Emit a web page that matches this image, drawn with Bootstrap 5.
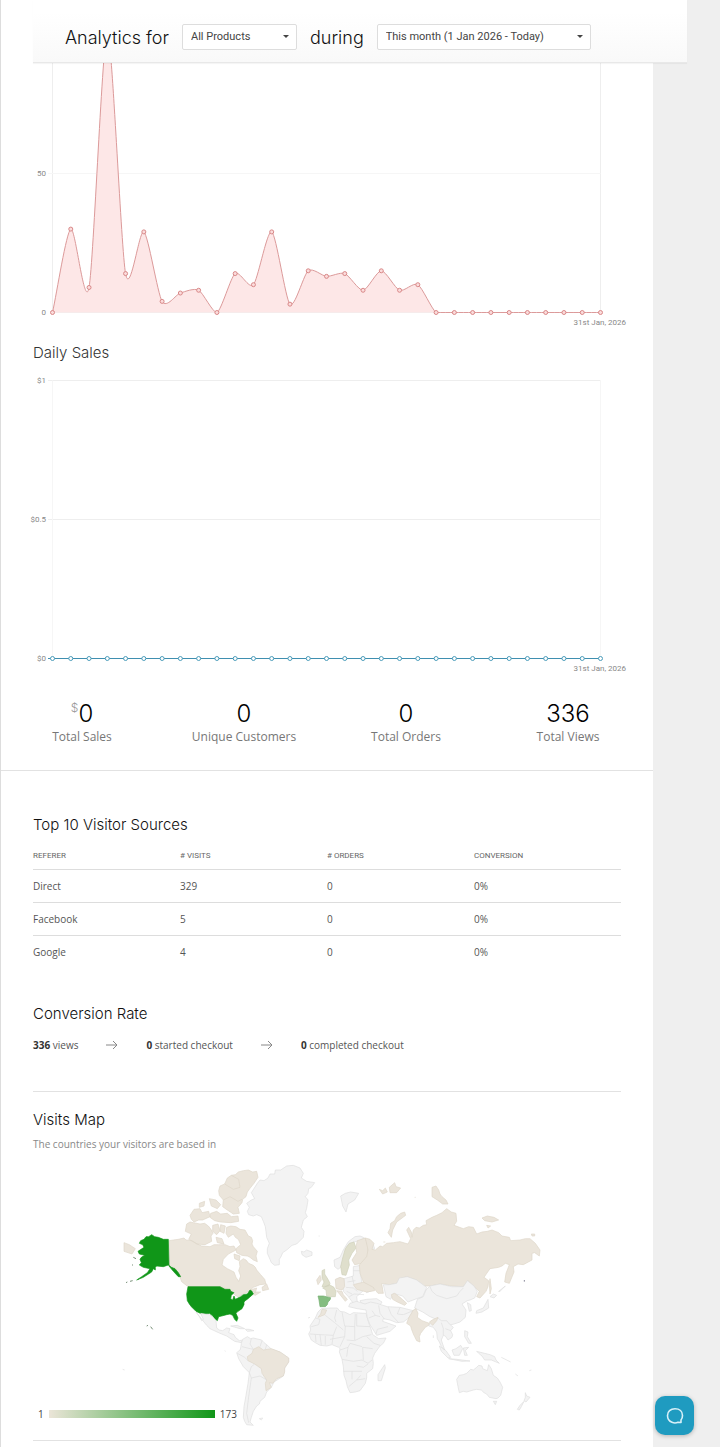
<!DOCTYPE html>
<html lang="en">
<head>
<meta charset="utf-8">
<meta name="viewport" content="width=device-width, initial-scale=1">
<title>Analytics</title>
<link href="https://cdn.jsdelivr.net/npm/bootstrap@5.3.0/dist/css/bootstrap.min.css" rel="stylesheet">
<style>
  body { background: #efefef; font-family: "Open Sans", "Noto Sans", sans-serif; font-size: 10px; line-height: 16px; color: #555; }
  .page { padding-right: 67px; }
  .panel { background: #fff; border-left: 1px solid #ddd; }
  .filters { position: relative; z-index: 2; gap: 13px; margin: 0 -34px 0 32px; padding: 11px 32px 0; height: 63px; background: linear-gradient(#fff 20%, #f9f9f9); border-bottom: 1px solid #e8e8e8; box-shadow: 0 1px 1px rgba(0,0,0,.04); }
  .filters label { font: 300 18px/24px Inter, sans-serif; color: #111; padding-top: 2px; }
  .filters .form-select { height: 26px; font: 11px/16px Roboto, sans-serif; color: #444; padding: 4px 24px 4px 8px; border: 1px solid #ddd; border-radius: 2px; background-image: url("data:image/svg+xml,%3Csvg xmlns='http://www.w3.org/2000/svg' viewBox='0 0 6 4'%3E%3Cpath d='M0 0h6L3 3z' fill='%23444'/%3E%3C/svg%3E"); background-size: 6px 4px; background-position: right 7px center; }
  .filters .pick-product { width: 115px; }
  .filters .pick-period { width: 214px; }
  h2 { font: 300 15px/24px Inter, sans-serif; color: #111; margin: 0; }
  .sales-title { color: #333; padding: 8px 32px; }
  .plot { display: block; width: 100%; height: auto; }
  .plot text { font: 8px Roboto, sans-serif; fill: #888; }
  .plot .rule { stroke: #eee; fill: none; }
  .plot .faint { stroke: #f6f6f6; }
  .visits-line { fill: none; stroke: #dc9a9a; }
  .visits-area { fill: #fde7e7; }
  .visits-dots circle { fill: #fbdcdc; stroke: #d98888; }
  .sales-line { fill: none; stroke: #3f8fb0; }
  .sales-dots circle { fill: #fff; stroke: #4a9cba; }
  .totals { padding: 14px 4px 25px 0; border-bottom: 1px solid #e2e2e2; }
  .total-figure { font: 300 24px/32px Inter, sans-serif; color: #000; padding-top: 1px; margin-bottom: -1px; }
  .total-figure sup { font-size: 12px; top: -10px; color: #999; line-height: 1; }
  .total-name { font-size: 12px; color: #777; }
  .sections { padding: 42px 32px 6px; }
  .sources { table-layout: fixed; width: 100%; }
  .sources th { font: 8px/12px Roboto, sans-serif; color: #666; text-transform: uppercase; padding: 13px 0 7px; border-bottom: 1px solid #ddd; }
  .sources td { padding: 8px 0; border-bottom: 1px solid #ddd; }
  .sources tr:last-child td { border-bottom: 0; }
  .conversion { margin-top: 34px; }
  .funnel { margin-top: 11px; gap: 28px; }
  .funnel strong { color: #333; }
  .split { border-top: 1px solid #e2e2e2; }
  .visits { margin-top: 38px; padding-top: 16px; }
  .page-end { margin-top: 10px; }
  .map-note { margin: 4px 0 0; color: #888; }
  .map-box { margin-top: 8px; }
  .world { display: block; width: 100%; height: auto; stroke-width: 2; stroke-linejoin: round; }
  .land { fill: #f3f3f3; stroke: #dedede; }
  .few { fill: #ebe5db; stroke: #ded7c9; }
  .some { fill: #dfdfcc; stroke: #cfd0ba; }
  .many { fill: #84bd80; stroke: #74ad70; }
  .most { fill: #109618; stroke: #109618; }
  .edge { fill: none; stroke: #dedede; }
  .few-edge { fill: none; stroke: #ded7c9; }
  .legend-row { position: absolute; left: 5px; bottom: 8px; gap: 5px; color: #444; }
  .ramp { width: 166px; height: 8px; background: linear-gradient(90deg, #ebe5d8, #109618); }
  .chat { position: fixed; right: 26px; bottom: 12px; width: 39px; height: 39px; border: 0; border-radius: 10px; background: #1f9bc0; box-shadow: 0 1px 4px rgba(0,0,0,.25); }
</style>
</head>
<body>
<div class="page">
<main class="panel">
  <form class="filters d-flex align-items-center">
    <label for="product">Analytics for</label>
    <select class="form-select pick-product" id="product"><option>All Products</option></select>
    <label for="period">during</label>
    <select class="form-select pick-period" id="period"><option>This month (1 Jan 2026 - Today)</option></select>
  </form>

  <svg class="plot" id="views-plot" viewBox="1 63 652 270" role="img" aria-label="Daily views">
    <path class="rule" d="M52.5 63V312.5H600.5V63"/>
    <path class="rule faint" d="M48 173.5H600.5"/>
    <path class="visits-area"/><path class="visits-line"/><g class="visits-dots"></g>
    <text x="46" y="176" text-anchor="end">50</text>
    <text x="46" y="315" text-anchor="end">0</text>
    <text x="626" y="325" text-anchor="end">31st Jan, 2026</text>
  </svg>

  <h2 class="sales-title">Daily Sales</h2>
  <svg class="plot" id="sales-plot" viewBox="1 373 652 310" role="img" aria-label="Daily sales">
    <path class="rule" d="M48 380.5H600.5M48 519.5H600.5"/>
    <path class="rule faint" d="M52.5 380.5V658M600.5 380.5V658"/>
    <path class="sales-line" d="M48 658.5H600.5"/><g class="sales-dots"></g>
    <text x="46" y="383" text-anchor="end">$1</text>
    <text x="46" y="522" text-anchor="end">$0.5</text>
    <text x="46" y="661" text-anchor="end">$0</text>
    <text x="626" y="671" text-anchor="end">31st Jan, 2026</text>
  </svg>

  <div class="totals row g-0 text-center">
    <div class="col"><div class="total-figure"><sup>$</sup>0</div><div class="total-name">Total Sales</div></div>
    <div class="col"><div class="total-figure">0</div><div class="total-name">Unique Customers</div></div>
    <div class="col"><div class="total-figure">0</div><div class="total-name">Total Orders</div></div>
    <div class="col"><div class="total-figure">336</div><div class="total-name">Total Views</div></div>
  </div>

  <div class="sections">
    <section>
      <h2>Top 10 Visitor Sources</h2>
      <table class="sources">
        <thead><tr><th>Referer</th><th># Visits</th><th># Orders</th><th>Conversion</th></tr></thead>
        <tbody>
          <tr><td>Direct</td><td>329</td><td>0</td><td>0%</td></tr>
          <tr><td>Facebook</td><td>5</td><td>0</td><td>0%</td></tr>
          <tr><td>Google</td><td>4</td><td>0</td><td>0%</td></tr>
        </tbody>
      </table>
    </section>

    <section class="conversion">
      <h2>Conversion Rate</h2>
      <div class="funnel d-flex align-items-center">
        <span><strong>336</strong> views</span>
        <svg width="12" height="10" viewBox="0 0 12 10" fill="none" stroke="#888"><path d="M0 5H11M7 1l4 4-4 4"/></svg>
        <span><strong>0</strong> started checkout</span>
        <svg width="12" height="10" viewBox="0 0 12 10" fill="none" stroke="#888"><path d="M0 5H11M7 1l4 4-4 4"/></svg>
        <span><strong>0</strong> completed checkout</span>
      </div>
    </section>

    <section class="split visits">
      <h2>Visits Map</h2>
      <p class="map-note">The countries your visitors are based in</p>
      <div class="map-box position-relative">
        <svg class="world" viewBox="-231 30 1764 810" role="img" aria-label="Visits by country">
          <!-- North America -->
          <path class="few" d="M177 272L190 270 205 268 222 264 228 270 245 272 262 282 275 288 300 290 312 284 325 284 345 284 360 290 372 288 378 300 355 312 340 328 336 345 352 356 372 366 378 382 386 394 392 378 386 362 390 350 388 335 400 326 408 330 416 340 430 346 436 352 440 360 452 374 464 388 468 402 450 404 430 412 420 420 440 414 436 428 420 422 400 432 385 440 375 436 360 420 330 410 234 410 215 395 205 368 190 350 177 345ZM456 412L470 402 476 418 458 422ZM425 432L440 426 452 426 436 436ZM350 232L362 228 378 230 390 238 405 240 415 258 424 262 428 272 426 282 430 290 442 304 438 318 442 335 430 330 420 322 412 318 395 316 380 308 378 296 392 284 385 268 376 262 370 252 355 262 348 250ZM230 222l10-6 10 2 20 4 14-2 11 8 8 10 6 12-6 8 2 16-20 10-25-2-12-8-12-6 8-16-18-8 2-12ZM308 226l16-4 6 20-10 12-12-10ZM332 224l14 4-4 22-12-6ZM318 262l18 4 6 16-20-4ZM372 312l18 6-2 14-14-6ZM240 196l12-18 18-2 6 12 20-4 4 16-22 10-12 0-14 6-8-8ZM268 160l16-6-2 14-14 4ZM298 146l20 4 14 14-10 12-18-8ZM302 190l18-6 12 8 20-2 12 10 20-2 2 16-24 4-30-2-18-4-14-10Z"/>
          <path class="few" d="M440 64L428 66 415 60 400 62 385 66 376 74 364 76 352 84 344 102 330 108 326 122 328 136 340 150 338 170 352 180 370 192 388 190 384 172 396 158 398 148 408 140 412 126 420 115 432 100 444 82ZM42 278L58 284 76 296 66 312 42 304Z"/>
          <path class="few-edge" d="M344 102L370 118 390 112 386 88 364 76M340 150L360 140 384 154 396 148"/>
          <path class="most" d="M175 268L160 268 145 262 134 260 125 254 116 260 108 260 102 268 92 272 88 280 98 284 102 292 84 304 88 312 104 316 94 322 90 328 94 338 88 345 100 352 120 356 112 368 95 380 80 390 100 382 125 366 130 356 136 360 136 352 140 348 160 350 175 345 185 352 195 356 205 368 212 380 205 380 190 364 177 348Z"/>
          <path class="most" d="M234 410L330 410 345 418 360 418 362 424 372 428 364 436 362 446 368 450 372 438 376 448 392 440 400 434 412 432 420 420 426 424 430 432 414 446 406 452 402 456 402 464 396 476 384 484 378 490 384 504 380 514 374 508 368 496 360 492 350 494 335 498 326 500 322 512 314 506 306 496 298 490 288 492 275 492 258 484 244 470 238 462 232 452 230 432Z"/>
          <path d="M60 394l8-2M48 398l4-2M70 322l8 4M66 344l3 2M110 528l4-2M122 530l6 8" stroke="#789078" stroke-width="3"/>
          <path class="land" d="M258 486L268 500 275 512 280 508 272 490 298 494 308 500 318 512 320 534 328 540 338 542 350 534 360 536 356 548 372 554 376 562 388 572 398 570 394 578 374 574 350 558 330 550 300 536 290 526ZM362 528l20-2 22 10-14 0ZM406 538l12 0 14 4-20 2Z"/>

          <!-- South America -->
          <g transform="translate(0 450)">
            <path class="land" d="M398 118L412 110 422 116 430 114 455 120 462 128 470 134 485 148 510 156 536 174 536 186 524 204 520 228 505 238 492 246 484 262 470 276 464 292 450 304 448 312 440 318 430 334 424 352 420 366 430 376 410 374 404 364 400 352 402 320 408 286 414 250 418 218 400 200 386 176 380 158 390 150 392 144 394 130Z"/>
            <path class="few" d="M430 148L446 140 460 150 484 146 510 156 522 164 536 174 536 186 524 204 524 216 520 228 500 236 488 250 478 248 484 262 468 272 466 250 470 240 456 220 454 206 434 192 414 182 412 170 426 160Z"/>
            <path class="edge" d="M418 218L424 234 416 290 410 340 416 368M434 192L424 200 418 218M424 234L450 228M450 228L470 240M382 160L404 172 414 182M396 140L420 146 430 148M424 116L420 132 430 148M456 122L450 140M470 134L466 148M448 356l10-2-4 6ZM344 152l3 2M38 208l6 2"/>
          </g>

          <!-- Greenland and Europe -->
          <g transform="translate(390 0)">
            <path class="land" d="M52 100L60 90 72 92 84 84 90 72 104 72 106 60 122 60 140 48 160 46 180 54 190 70 184 84 200 94 224 98 214 112 206 116 204 130 196 140 204 150 200 175 196 188 202 200 190 210 184 232 192 244 190 262 170 282 156 286 140 300 128 308 124 318 118 328 118 344 104 346 94 338 90 328 82 310 82 296 88 280 80 262 78 245 76 230 70 214 64 200 50 194 40 198 26 194 22 184 28 172 20 160 34 150 44 146 34 128ZM184 304L192 306 200 300 216 306 216 316 198 322 186 314ZM302 138l14-8 16-4 24 4-12 20-20 12-6 24-10-18ZM236 258h3"/>
            <path class="land" d="M284 350L282 330 300 322 310 300 325 275 345 260 360 258 370 262 400 284 404 296 390 300 384 290 372 264 360 272 340 276 320 290 312 320 302 352 294 358ZM340 350L362 346 362 372 366 404 400 404 400 420 380 428 372 420 350 440 352 456 340 460 325 440 310 424 312 386 340 378ZM360 452L380 448 410 446 426 456 420 466 370 468Z"/>
            <path class="some" d="M342 276L348 294 336 310 326 330 328 345 318 376 306 374 302 350 308 324 316 296 328 280ZM246 362l8-4 0 14 10 16 6 12-4 8-20 2 6-14-6-12ZM248 414L268 404 282 412 288 424 286 440 272 440 260 438 258 420Z"/>
            <path class="few" d="M352 272L376 264 384 290 384 315 366 340 344 344 336 330 350 308 348 290ZM230 390l10-14 4 14-10 14ZM286 388L300 382 312 386 314 410 306 420 288 416ZM290 422L306 424 310 434 322 448 316 454 300 434ZM340 404L372 396 400 408 404 422 380 426 350 418ZM418 118l10 4 8-8 6 12-14 6ZM448 112l16-14 4 12 14 4-12 14-20 0ZM494 186L482 190 470 200 464 212 452 220 450 236 444 248 454 262 458 240 470 216 497 196Z"/>
            <path class="edge" d="M322 396L346 392M318 412L340 414 352 424 M336 378L342 404M328 440L342 432 372 434M320 424L336 432M340 362H362"/>
            <path class="many" d="M234 438L250 438 272 443 270 450 264 456 262 464 256 470 246 470 240 470 237 450Z"/>
          </g>

          <!-- Northern Asia -->
          <g transform="translate(810 0)">
            <path class="few" d="M-44 264L-30 268 -18 280 -24 298 -14 300 0 288 8 290 20 280 40 278 60 275 84 282 92 266 80 240 86 232 94 246 96 262 100 240 108 232 118 234 130 226 140 224 138 212 156 202 170 196 186 188 200 176 214 186 228 190 230 214 222 226 250 236 266 230 280 232 290 252 306 246 322 244 336 240 356 248 366 258 388 262 392 272 420 270 436 266 450 266 466 280 480 300 478 318 464 308 456 310 456 330 430 344 414 342 400 350 402 366 388 400 374 396 378 370 388 344 376 340 366 348 356 352 330 356 312 382 326 392 324 410 318 424 300 444 290 440 298 424 282 410 264 392 250 410 215 408 180 402 150 408 132 408 110 390 80 380 60 386 50 400 28 404 5 400 10 430 -6 430 -20 412 -50 396 -60 370 -62 345 -40 320 -36 300ZM156 112L168 108 176 120 180 132 186 140 198 150 204 162 188 162 172 150 156 140ZM306 204l16-6 20 4 14 8-20 6-22-4ZM320 226l12 2-8 6ZM454 252l10 0 0 6-8 0ZM330 386l4 30-4 16-2-30ZM104 142h3M10 276l6 0"/>
            <path class="land" d="M10 404L28 404 50 400 58 384 82 380 110 390 140 412 128 440 110 446 84 456 68 438 40 430 32 448 18 440ZM150 408L180 402 215 410 250 410 262 392 282 408 292 424 284 444 270 450 262 452 246 462 258 480 256 502 240 516 222 522 205 526 190 524 170 508 150 500 128 486 104 474 112 448 130 440 138 420ZM262 458l10 6 2 18-6 2ZM330 440l10-8 10 4-8 8ZM324 448l2 26-20 12-18 4 2-8 20-8ZM356 424l20-16-18 18Z"/>
            <path class="edge" d="M150 410L156 424 170 436 200 446 230 438 240 424 250 414"/>
            <path class="few" d="M34 434L44 430 60 442 80 460 74 466 52 456 38 448Z"/>
            <path d="M433 390v5" stroke="#889" stroke-width="3"/>
          </g>

          <!-- Africa, southern Asia and Oceania -->
          <g transform="translate(570 420)">
            <path class="land" d="M64 56L90 54 112 54 120 64 134 66 150 74 160 68 198 70 206 98 214 120 218 134 236 146 258 144 250 160 240 168 224 190 218 204 220 220 218 236 200 250 200 264 196 280 180 302 166 306 150 308 142 290 138 272 132 256 130 230 126 208 118 186 120 176 116 172 96 164 80 168 60 166 46 158 34 150 26 132 32 120 30 108 46 84 54 66ZM254 224l2 10-12 38-10 0 0-18 8-12Z"/>
            <path class="edge" d="M46 84L60 88 56 104 34 110M76 76L104 98 130 120M110 60L104 84 108 96M126 66L134 108 164 110 166 72M170 72V108L210 110M30 132L60 134 64 166M60 134L100 136 110 110M90 148L134 140 136 108M134 140L120 170M140 150L164 152 188 140 214 134M164 110V150M188 172L190 210M120 180L144 172 150 160 186 170M126 208L160 214 186 210M130 244L186 244M156 244V268M146 290L170 270 196 266M188 172L218 176M200 140L222 160 240 166M186 210L204 220 216 210M76 138V164M170 228L190 232 204 222M170 270L182 256M144 172L140 200M46 134L48 156M100 136L96 162"/>
            <path class="land" d="M150 40L170 34 195 42 212 36 230 40 262 50 300 52 340 62 326 84 310 96 290 98 270 90 250 86 248 94 288 108 270 124 230 136 220 120 210 104 202 84 198 60 172 56 146 50ZM386 108L392 94 414 84 424 92 440 92 448 102 460 112 452 122 458 134 456 142 444 150 436 138 430 136 424 150 434 180 424 170 418 156 412 146 410 126 400 112ZM418 168l20 14 14 20-8 2-20-20ZM446 206l24 2 40 5-24 1ZM456 180l12-4 14-10 6 10-10 20-16 0ZM490 174l16-2-10 10 6 14-8 0ZM494 122l10 4-2 14 12 20-8 0-12-20ZM530 184l24 6 16 4 14 6 4 10 10 10-24-10-20 0-8-12-10-8Z"/>
            <path class="edge" d="M236 46L240 70 254 88M264 50L274 74 296 98M300 52L292 72 310 74 340 62M206 84L226 76 240 80M228 132L232 118 264 110M216 62L226 76M424 98L430 116 430 136M436 116L452 122M604 202l28 14M646 252l8 6M688 242l6-2M24 84l6-2M400 136v8"/>
            <path class="few" d="M340 60L348 56 354 70 352 82 366 92 388 100 386 106 376 112 362 130 358 140 360 156 350 152 344 140 340 132 334 116 332 108 320 100 326 84ZM388 96L400 88 414 82 410 92 398 106ZM66 58l14 2-6 14-20 8 8-10Z"/>
            <path class="land" d="M470 268L478 256 490 254 500 250 512 238 520 240 530 232 536 226 546 228 548 236 562 242 566 224 574 236 580 256 592 264 600 276 608 292 602 316 594 324 588 326 568 322 560 312 552 308 544 300 530 298 520 300 500 306 490 304 478 308 474 290ZM580 334l10 0-4 10ZM676 308l4 10 10 4-12 14-6-4 4-10ZM672 334l-8 16-6 10-6-2 8-12Z"/>
          </g>
        </svg>
        <div class="legend-row d-flex align-items-center"><span>1</span><div class="ramp"></div><span>173</span></div>
      </div>
    </section>
    <div class="split page-end"></div>
  </div>
</main>
</div>

<button class="chat d-flex align-items-center justify-content-center p-0" type="button" aria-label="Open chat">
  <svg width="20" height="20" viewBox="0 0 20 20" fill="none" stroke="#d8f0f8" stroke-width="1.6" stroke-linejoin="round"><path d="M16 16.5L13 16.3C11.500 17 8.500 17 7 16.300C3.500 15 2.500 12.500 2.500 9.500C2.500 5.500 5.500 2.800 10 2.800S17.500 5.500 17.500 9.500C17.500 11.500 17 12.800 16 14Z"/></svg>
</button>

<script src="https://cdn.jsdelivr.net/npm/bootstrap@5.3.0/dist/js/bootstrap.bundle.min.js"></script>
<script>
  const views = [0,30,9,101,14,29,4,7,8,0,14,10,29,3,15,13,14,8,15,8,10,0,0,0,0,0,0,0,0,0,0];
  const left = 52.5, step = 548 / 30, base = 312.5, unit = 2.78;
  const pts = views.map((v, i) => [left + i * step, base - v * unit]);
  const slope = pts.map((p, i) => {
    const a = pts[Math.max(i - 1, 0)], b = pts[Math.min(i + 1, pts.length - 1)];
    return (b[1] - a[1]) / (b[0] - a[0]);
  });
  let line = 'M' + pts[0];
  for (let i = 1; i < pts.length; i++) {
    const [px, py] = pts[i - 1], [x, y] = pts[i], q = (x - px) / 4;
    line += `C${px + q},${Math.min(base, py + q * slope[i - 1])} ${x - q},${Math.min(base, y - q * slope[i])} ${x},${y}`;
  }
  document.querySelector('.visits-line').setAttribute('d', line);
  document.querySelector('.visits-area').setAttribute('d', line + 'Z');
  const dots = (sel, list) => document.querySelector(sel).innerHTML =
    list.map(([x, y]) => `<circle cx="${x}" cy="${y}" r="2"/>`).join('');
  dots('.visits-dots', pts);
  dots('.sales-dots', pts.map(([x]) => [x, 658.5]));
</script>
</body>
</html>
